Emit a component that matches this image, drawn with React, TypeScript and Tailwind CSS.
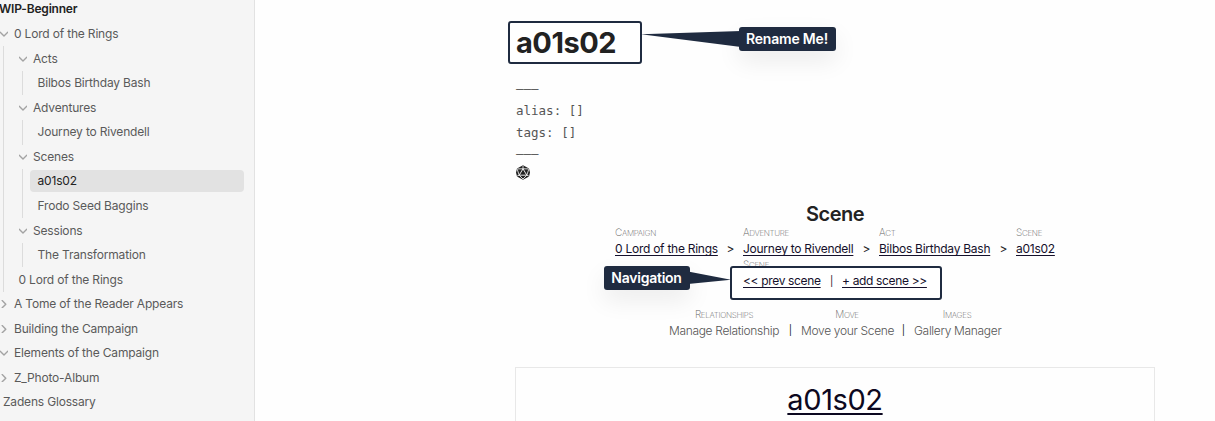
import type { ReactNode } from "react";

function Chevron({ open }: { open: boolean }) {
  return (
    <svg width="8" height="8" viewBox="0 0 8 8" fill="none" stroke="#a3a3a3" strokeWidth="1.4" strokeLinecap="round" strokeLinejoin="round">
      {open ? <path d="M0.2 2.2 L4 6 L7.8 2.2" /> : <path d="M2.2 0.6 L5.8 4.2 L2.2 7.8" />}
    </svg>
  );
}

function Folder({ name, open = true, children }: { name: string; open?: boolean; children?: ReactNode }) {
  return (
    <div>
      <div className="flex h-[24.57px] items-center gap-[6px]">
        <Chevron open={open} />
        <span>{name}</span>
      </div>
      {children && <div className="ml-[3px] border-l border-[#dcdcdc] pl-[15px]">{children}</div>}
    </div>
  );
}

function Leaf({ name, active = false }: { name: string; active?: boolean }) {
  return (
    <div className="-ml-[8px] flex h-[24.57px] items-center">
      <div className={active ? "flex h-[22px] w-[214px] items-center rounded-[4px] bg-[#e2e2e2] pl-[7.5px] text-[#222]" : "pl-[7.5px]"}>{name}</div>
    </div>
  );
}

function Sidebar() {
  return (
    <aside className="h-[421px] w-[255px] shrink-0 overflow-hidden border-r border-[#e2e2e2] bg-[#f5f5f5] text-[12px] tracking-[-0.18px] whitespace-nowrap text-[#5a5a5a]">
      <div className="-mt-[2.8px] flex h-[24.57px] items-center font-semibold tracking-[-0.2px] text-[#222]">
        <span className="-ml-px">WIP-Beginner</span>
      </div>
      <Folder name="0 Lord of the Rings">
        <Folder name="Acts">
          <Leaf name="Bilbos Birthday Bash" />
        </Folder>
        <Folder name="Adventures">
          <Leaf name="Journey to Rivendell" />
        </Folder>
        <Folder name="Scenes">
          <Leaf name="a01s02" active />
          <Leaf name="Frodo Seed Baggins" />
        </Folder>
        <Folder name="Sessions">
          <Leaf name="The Transformation" />
        </Folder>
        <Leaf name="0 Lord of the Rings" />
      </Folder>
      <Folder name="A Tome of the Reader Appears" open={false} />
      <Folder name="Building the Campaign" open={false} />
      <Folder name="Elements of the Campaign" />
      <Folder name="Z_Photo-Album" open={false} />
      <div className="flex h-[24.57px] items-center pl-[3px]">Zadens Glossary</div>
    </aside>
  );
}

function Label({ children }: { children: string }) {
  return (
    <div className="h-[15px] text-[8px] leading-[15px] font-extralight tracking-[-0.3px] text-[#606060] uppercase first-letter:text-[10px]">
      {children}
    </div>
  );
}

function Crumb({ label, name, width }: { label: string; name: string; width: string }) {
  return (
    <div className={width}>
      <Label>{label}</Label>
      <div className="h-[17px] text-[12px] leading-[17px] tracking-[-0.26px] text-[#15102b] underline underline-offset-2">{name}</div>
    </div>
  );
}

function Separator() {
  return <div className="w-[25px] pt-[15px] text-center text-[12px] leading-[17px]">&gt;</div>;
}

function Action({ label, name, width }: { label: string; name: string; width: string }) {
  return (
    <div className={width}>
      <div className="text-center">
        <Label>{label}</Label>
      </div>
      <div className="text-center text-[12px] leading-[17px] font-light tracking-[-0.32px] text-[#555]">{name}</div>
    </div>
  );
}

function Bar() {
  return <div className="w-[21px] pt-[15px] text-center text-[10px] leading-[17px]">|</div>;
}

function DieIcon() {
  return (
    <svg className="block" width="14" height="15" viewBox="0 0 14 15">
      <path d="M7 .2 13 3.4 14 7.5 13 11.6 7 14.8 1 11.6 0 7.5 1 3.4Z" fill="#222" />
      <path d="M7 3.8 3.2 10.2h7.6Z" fill="#222" stroke="#fff" strokeWidth=".9" />
      <path d="M7 .8v3M1.4 3.9 7 3.8l5.6.1M1.2 11l2-.8L1.2 4.2M12.8 11l-2-.8 2-6M3.2 10.2 7 14l3.8-3.8" fill="none" stroke="#fff" strokeWidth=".8" />
    </svg>
  );
}

function Callouts() {
  return (
    <>
      <svg className="absolute top-[30px] left-[641px]" width="100" height="20" viewBox="0 0 100 20">
        <path d="M0 4.2 100 1v16Z" fill="#1f2b40" />
      </svg>
      <div className="absolute top-[27px] left-[739px] flex h-[24px] w-[97px] items-center justify-center rounded-[3px] bg-[#1f2b40] pr-px pb-px text-[14px] font-semibold tracking-[-0.2px] text-white shadow-[0_10px_24px_rgba(0,0,0,0.08)]">
        Rename Me!
      </div>
      <div className="absolute top-[266px] left-[730px] flex h-[34px] w-[212px] rounded-[3px] border-2 border-[#1f2b40] bg-white pl-[11px] text-[12px] leading-[26px] tracking-[-0.34px] whitespace-nowrap text-[#15102b]">
        <span className="w-[78px] underline underline-offset-2">&lt;&lt; prev scene</span>
        <span className="w-[21px] text-center text-[10px]">|</span>
        <span className="underline underline-offset-2">+ add scene &gt;&gt;</span>
      </div>
      <svg className="absolute top-[270px] left-[688px]" width="43" height="16" viewBox="0 0 43 16">
        <path d="M0 1.5 43 9.7 0 14Z" fill="#1f2b40" />
      </svg>
      <div className="absolute top-[266px] left-[604px] flex h-[24px] w-[86px] items-center justify-center rounded-[3px] bg-[#1f2b40] pr-px pb-px text-[14px] font-semibold tracking-[-0.25px] text-white shadow-[0_10px_24px_rgba(0,0,0,0.08)]">
        Navigation
      </div>
    </>
  );
}

export default function App() {
  return (
    <div className="relative flex h-[421px] w-[1215px] overflow-hidden bg-[#fefefe] font-['Inter',sans-serif] text-[#222]">
      <Sidebar />
      <main className="ml-[260px] flex w-[640px] shrink-0 flex-col whitespace-nowrap *:shrink-0">
        <h1 className="mt-[21px] -ml-[7px] flex h-[43px] w-[134px] items-center rounded-[3px] border-2 border-[#1f2b40] bg-white pl-[6px] text-[29px] leading-none font-bold tracking-[-0.5px]">
          a01s02
        </h1>
        <pre className="mt-[14px] pl-px font-['DejaVu_Sans_Mono',monospace] text-[12.5px] leading-[21.8px] text-[#555]">
          {"———\nalias: []\ntags: []\n———"}
        </pre>
        <div className="pl-px">
          <DieIcon />
        </div>
        <h2 className="mt-[20px] h-[25px] text-center text-[20px] leading-[28px] font-semibold tracking-[-0.5px]">Scene</h2>
        <div className="ml-[100px] flex">
          <Crumb label="Campaign" name="0 Lord of the Rings" width="w-[103px]" />
          <Separator />
          <Crumb label="Adventure" name="Journey to Rivendell" width="w-[111px]" />
          <Separator />
          <Crumb label="Act" name="Bilbos Birthday Bash" width="w-[112px]" />
          <Separator />
          <Crumb label="Scene" name="a01s02" width="w-[40px]" />
        </div>
        <div className="ml-[228px] h-[50px]">
          <Label>Scene</Label>
        </div>
        <div className="ml-[153px] flex">
          <Action label="Relationships" name="Manage Relationship" width="w-[112px]" />
          <Bar />
          <Action label="Move" name="Move your Scene" width="w-[92px]" />
          <Bar />
          <Action label="Images" name="Gallery Manager" width="w-[86px]" />
        </div>
        <section className="mt-[28px] h-[100px] border border-[#e8e8e8] pt-[14px] text-center text-[29px] leading-[36px] tracking-[-0.4px] text-[#0c0820]">
          <span className="underline decoration-2 underline-offset-[3px]">a01s02</span>
        </section>
      </main>
      <Callouts />
    </div>
  );
}
